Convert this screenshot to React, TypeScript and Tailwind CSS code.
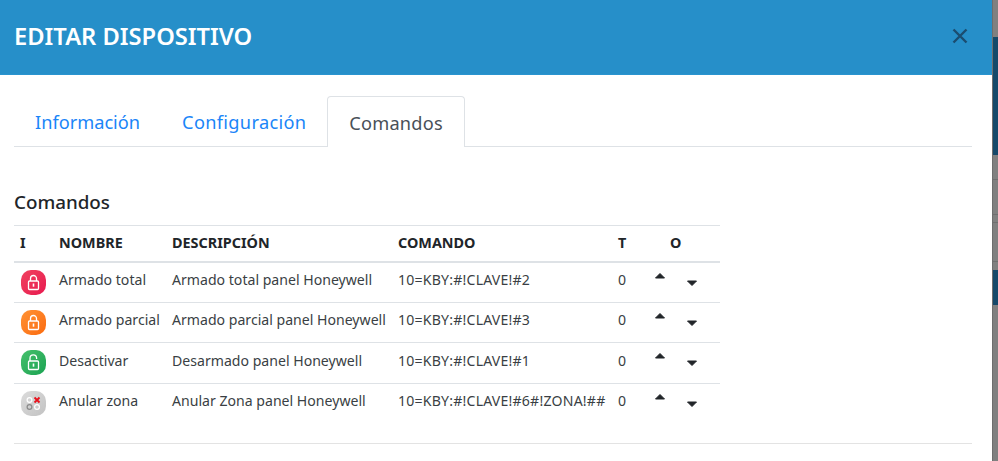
import React from 'react';

type Row = { icon: 'red' | 'orange' | 'green' | 'gray'; name: string; desc: string; cmd: string };

const rows: Row[] = [
	{ icon: 'red', name: 'Armado total', desc: 'Armado total panel Honeywell', cmd: '10=KBY:#!CLAVE!#2' },
	{ icon: 'orange', name: 'Armado parcial', desc: 'Armado parcial panel Honeywell', cmd: '10=KBY:#!CLAVE!#3' },
	{ icon: 'green', name: 'Desactivar', desc: 'Desarmado panel Honeywell', cmd: '10=KBY:#!CLAVE!#1' },
	{ icon: 'gray', name: 'Anular zona', desc: 'Anular Zona panel Honeywell', cmd: '10=KBY:#!CLAVE!#6#!ZONA!##' },
];

function LockGlyph({ open }: { open?: boolean }) {
	return (
		<svg width="25" height="25" viewBox="0 0 25 25" fill="none">
			<rect x="7.5" y="11" width="10" height="8.5" rx="1" stroke="white" strokeWidth="1.3" />
			{open ? (
				<path d="M9 11V8.2a3.3 3.3 0 0 1 6.6 0V9" stroke="white" strokeWidth="1.3" />
			) : (
				<path d="M9.5 11V8.5a3 3 0 0 1 6 0V11" stroke="white" strokeWidth="1.3" />
			)}
			<rect x="11.7" y="13.5" width="1.6" height="3.2" fill="white" />
		</svg>
	);
}

function ZoneGlyph() {
	return (
		<svg width="25" height="25" viewBox="0 0 25 25" fill="none">
			<circle cx="8.5" cy="9" r="2.4" stroke="white" strokeWidth="1.2" />
			<circle cx="8.5" cy="16" r="2.4" stroke="#8a8a8a" strokeWidth="1.2" />
			<circle cx="16" cy="16" r="2.4" stroke="white" strokeWidth="1.2" />
			<path d="M13.5 6.5l5 5M18.5 6.5l-5 5" stroke="#e8101c" strokeWidth="1.8" />
		</svg>
	);
}

function RowIcon({ icon }: { icon: Row['icon'] }) {
	if (icon === 'red') {
		return (
			<div className="h-[25px] w-[25px] rounded-[10px] bg-gradient-to-br from-[#f0405f] to-[#e8154f]">
				<LockGlyph />
			</div>
		);
	}
	if (icon === 'orange') {
		return (
			<div className="h-[25px] w-[25px] rounded-[10px] bg-gradient-to-br from-[#ff9233] to-[#fb6a0a]">
				<LockGlyph />
			</div>
		);
	}
	if (icon === 'green') {
		return (
			<div className="h-[25px] w-[25px] rounded-[10px] bg-gradient-to-br from-[#45c06c] to-[#17a352]">
				<LockGlyph open />
			</div>
		);
	}
	return (
		<div className="h-[25px] w-[25px] rounded-[10px] bg-gradient-to-br from-[#dcdcdc] to-[#c2c2c2]">
			<ZoneGlyph />
		</div>
	);
}

function Arrows() {
	return (
		<div className="flex items-start">
			<svg width="10" height="6" viewBox="0 0 10 6" className="mt-[-6px]">
				<path d="M5 0.5L9.5 5H0.5z" fill="#212529" stroke="#212529" strokeLinejoin="round" />
			</svg>
			<svg width="10" height="6" viewBox="0 0 10 6" className="ml-[22px] mt-[1px]">
				<path d="M0.5 1H9.5L5 5.5z" fill="#212529" stroke="#212529" strokeLinejoin="round" />
			</svg>
		</div>
	);
}

export default function App() {
	return (
		<div className="flex h-[461px] w-[998px] overflow-hidden bg-white font-['Noto_Sans',sans-serif] text-[#212529]">
			<div className="w-[992px] shrink-0">
				<header className="flex h-[75px] items-center justify-between border-b border-[#2a94cf] bg-[#268fc9] pl-[14px] pr-[24px]">
					<h1 className="text-[23.7px] font-semibold text-white">EDITAR DISPOSITIVO</h1>
					<svg width="16" height="16" viewBox="0 0 16 16" fill="none" className="mt-[-3px]">
						<path d="M1.5 1.5l13 13M14.5 1.5l-13 13" stroke="#1b4d70" strokeWidth="2.4" />
					</svg>
				</header>

				<div className="pl-[14px] pr-[20px]">
					<nav className="mt-[21px] flex h-[51px] border-b border-[#dee2e6] text-[18.2px]">
						<a className="px-[21px] pt-[13px] text-[#1a85f8]">Información</a>
						<a className="px-[21px] pt-[13px] tracking-[0.32px] text-[#1a85f8]">Configuración</a>
						<a className="-mb-px rounded-t border border-b-0 border-[#dee2e6] bg-white px-[21px] pt-[13px] tracking-[0.2px] text-[#495057]">Comandos</a>
					</nav>

					<h2 className="mt-[41px] h-[37px] text-[18.8px] font-medium leading-[28px]">Comandos</h2>

					<table className="w-[706px] table-fixed border-collapse text-left text-[14.1px]">
						<colgroup>
							<col className="w-[39px]" />
							<col className="w-[113px]" />
							<col className="w-[226px]" />
							<col className="w-[220px]" />
							<col className="w-[40px]" />
							<col />
						</colgroup>
						<thead>
							<tr className="h-[36px] border-t border-b-2 border-[#dee2e6] text-[14.4px] font-bold">
								<th className="pl-[6px]">I</th>
								<th className="pl-[6px]">NOMBRE</th>
								<th className="pl-[6px]">DESCRIPCIÓN</th>
								<th className="pl-[6px]">COMANDO</th>
								<th className="pl-[6px]">T</th>
								<th className="pl-[18px]">O</th>
							</tr>
						</thead>
						<tbody className="text-[#3a3f44]">
							{rows.map((row) => (
								<tr key={row.name} className="h-[40.5px] border-b border-[#dee2e6] last:border-b-0">
									<td className="pl-[7px]"><RowIcon icon={row.icon} /></td>
									<td className="whitespace-nowrap pb-[5px] pl-[6px]">{row.name}</td>
									<td className="whitespace-nowrap pb-[5px] pl-[6px]">{row.desc}</td>
									<td className="whitespace-nowrap pb-[5px] pl-[6px] tracking-[0.2px]">{row.cmd}</td>
									<td className="pb-[5px] pl-[6px]">0</td>
									<td className="pl-[3px]"><Arrows /></td>
								</tr>
							))}
						</tbody>
					</table>

					<div className="mt-[19px] border-t border-[#e3e3e3]" />
				</div>
			</div>

			{/* page behind the modal, dimmed */}
			<div className="flex w-[6px] flex-col border-l border-[#6e6e6e] bg-[#808080]">
				<div className="h-[37px]" />
				<div className="h-[118px] bg-[#15496a]" />
				<div className="h-[25px] border-b border-[#6f6f6f]" />
				<div className="h-[35px] border-b border-[#6f6f6f]" />
				<div className="h-[8px] border-b border-[#6f6f6f]" />
				<div className="h-[39px] border-b border-[#6f6f6f]" />
				<div className="h-[8px]" />
				<div className="h-[35px] bg-[#15496a]" />
			</div>
		</div>
	);
}
